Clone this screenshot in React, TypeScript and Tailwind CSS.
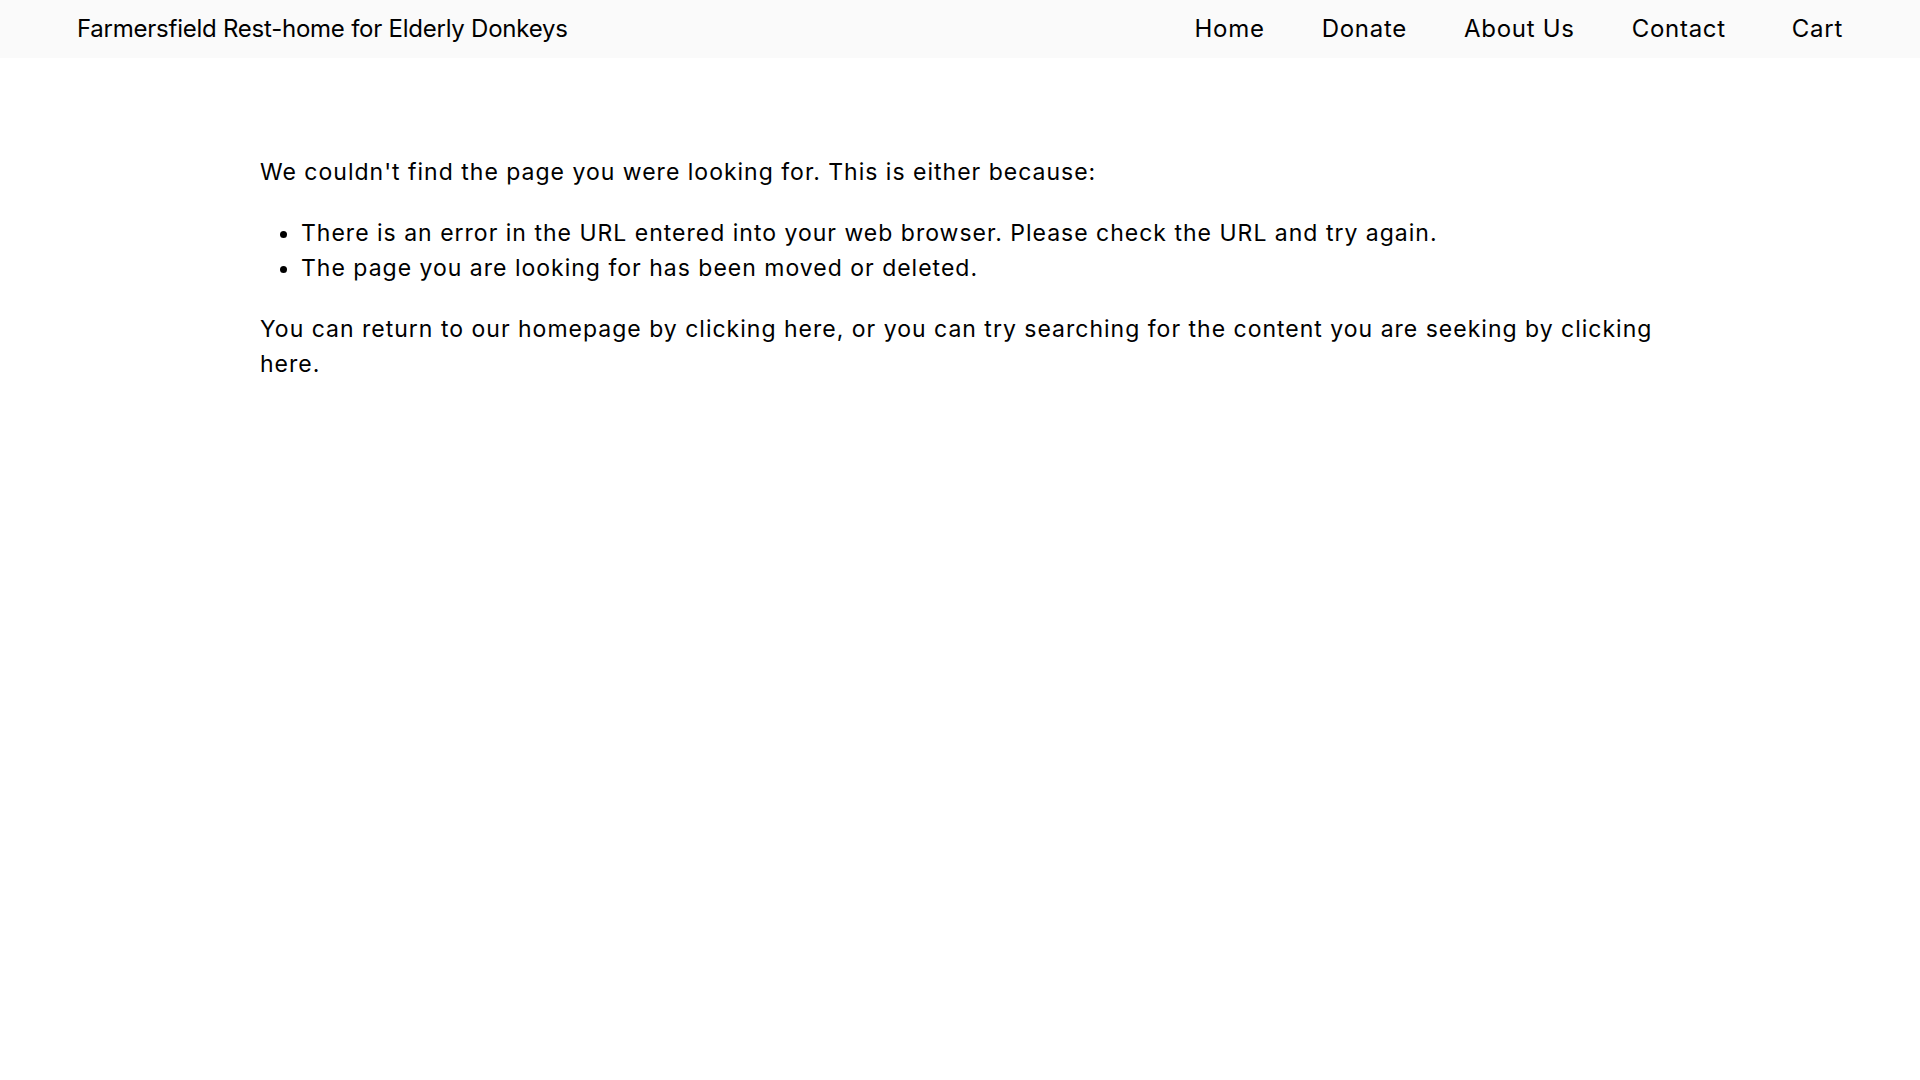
import React from "react";

export default function App() {
  const font = { fontFamily: "Inter, 'Noto Sans', sans-serif" };
  return (
    <div className="min-h-screen bg-white text-black" style={font}>
      <header className="h-[58px] bg-[#fafafa] flex items-center justify-between px-[77px]">
        <a className="text-[24px] leading-none text-black tracking-[-0.01em]">Farmersfield Rest-home for Elderly Donkeys</a>
        <nav className="flex items-center text-[24px] leading-none text-black tracking-[0.03em]">
          <div className="flex items-center gap-[57px]">
            <a>Home</a>
            <a>Donate</a>
            <a>About Us</a>
            <a>Contact</a>
          </div>
          <a className="ml-[66px]">Cart</a>
        </nav>
      </header>
      <main className="pt-[97px] px-[260px]">
        <div className="max-w-[1400px] text-[23px] leading-[35.5px] tracking-[1px]">
          <p>We couldn't find the page you were looking for. This is either because:</p>
          <ul className="list-disc pl-[41px] mt-[25px]">
            <li>There is an error in the URL entered into your web browser. Please check the URL and try again.</li>
            <li>The page you are looking for has been moved or deleted.</li>
          </ul>
          <p className="mt-[25px]">
            You can return to our homepage by <a>clicking here</a>, or you can try searching for the content you are seeking by <a>clicking here</a>.
          </p>
        </div>
      </main>
    </div>
  );
}
